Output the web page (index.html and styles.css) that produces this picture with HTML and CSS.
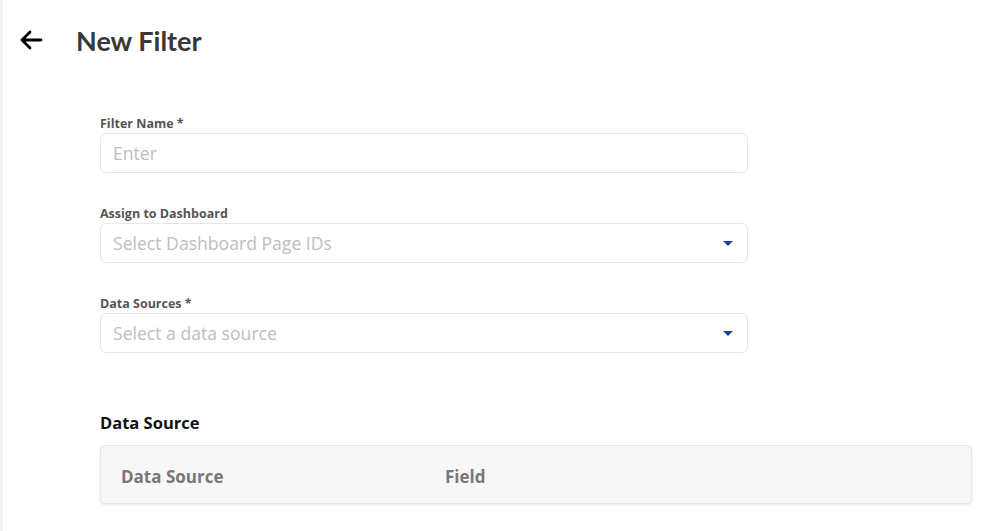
FILE: index.html
```html
<!DOCTYPE html>
<html>
<head>
	<title> New Filter </title>
	<link rel="stylesheet" href="styles.css">
</head>
<body>
    <div class="page">
        <div class="header">
            <svg class="back" width="24" height="20" viewBox="0 0 24 20">
                <path d="M22 10H3M11 2L3 10l8 8" fill="none" stroke="#000" stroke-width="2.8" stroke-linecap="round" stroke-linejoin="round"/>
            </svg>
            <h1> New Filter </h1>
        </div>

        <div class="form">
            <div class="field">
                <label> Filter Name * </label>
                <div class="box"><span class="placeholder">Enter</span></div>
            </div>

            <div class="field">
                <label> Assign to Dashboard </label>
                <div class="box">
                    <span class="placeholder">Select Dashboard Page IDs</span>
                    <span class="caret"></span>
                </div>
            </div>

            <div class="field">
                <label> Data Sources * </label>
                <div class="box">
                    <span class="placeholder">Select a data source</span>
                    <span class="caret"></span>
                </div>
            </div>

            <h2> Data Source </h2>
            <div class="table">
                <div class="cell first"> Data Source </div>
                <div class="cell"> Field </div>
            </div>
        </div>
    </div>
</body>
</html>
```

FILE: styles.css
```css
body {
    font-family: 'Open Sans', sans-serif;
    margin: 0;
    background: #fff;
}
.page {
    height: 531px;
    border-left: 3px solid #f3f3f3;
    box-sizing: border-box;
}
.header {
    display: flex;
    align-items: center;
    padding: 27px 0 0 16px;
    height: 26px;
}
.back {
    margin-right: 33px;
}
h1 {
    margin: 0;
    font-family: 'Lato', sans-serif;
    font-size: 27px;
    font-weight: 700;
    color: #383838;
}
.form {
    padding: 63px 0 0 97px;
    width: 872px;
}
.field {
    width: 648px;
    margin-bottom: 33px;
}
label {
    display: block;
    font-size: 12.5px;
    font-weight: 700;
    color: #555;
    height: 16px;
    line-height: 16px;
    margin-bottom: 1px;
}
.box {
    box-sizing: border-box;
    height: 40px;
    border: 1px solid #e6e6e6;
    border-radius: 6px;
    padding: 0 12px;
    display: flex;
    align-items: center;
    justify-content: space-between;
}
.placeholder {
    font-size: 17.6px;
    color: #bdbdbd;
}
.caret {
    width: 0;
    height: 0;
    border-left: 5px solid transparent;
    border-right: 5px solid transparent;
    border-top: 5px solid #1a3fa0;
    margin-right: 2px;
}
h2 {
    margin: 60px 0 0;
    font-size: 16.5px;
    font-weight: 700;
    color: #111;
    height: 20px;
    line-height: 20px;
}
.table {
    margin-top: 12px;
    height: 59px;
    padding-top: 3px;
    box-sizing: border-box;
    background: #f7f7f7;
    border: 1px solid #e8e8e8;
    border-radius: 4px;
    box-shadow: 0 1px 2px rgba(0, 0, 0, 0.08);
    display: flex;
    align-items: center;
}
.cell {
    font-size: 17px;
    font-weight: 700;
    color: #777;
    padding-left: 20px;
}
.cell.first {
    width: 304px;
}
```
